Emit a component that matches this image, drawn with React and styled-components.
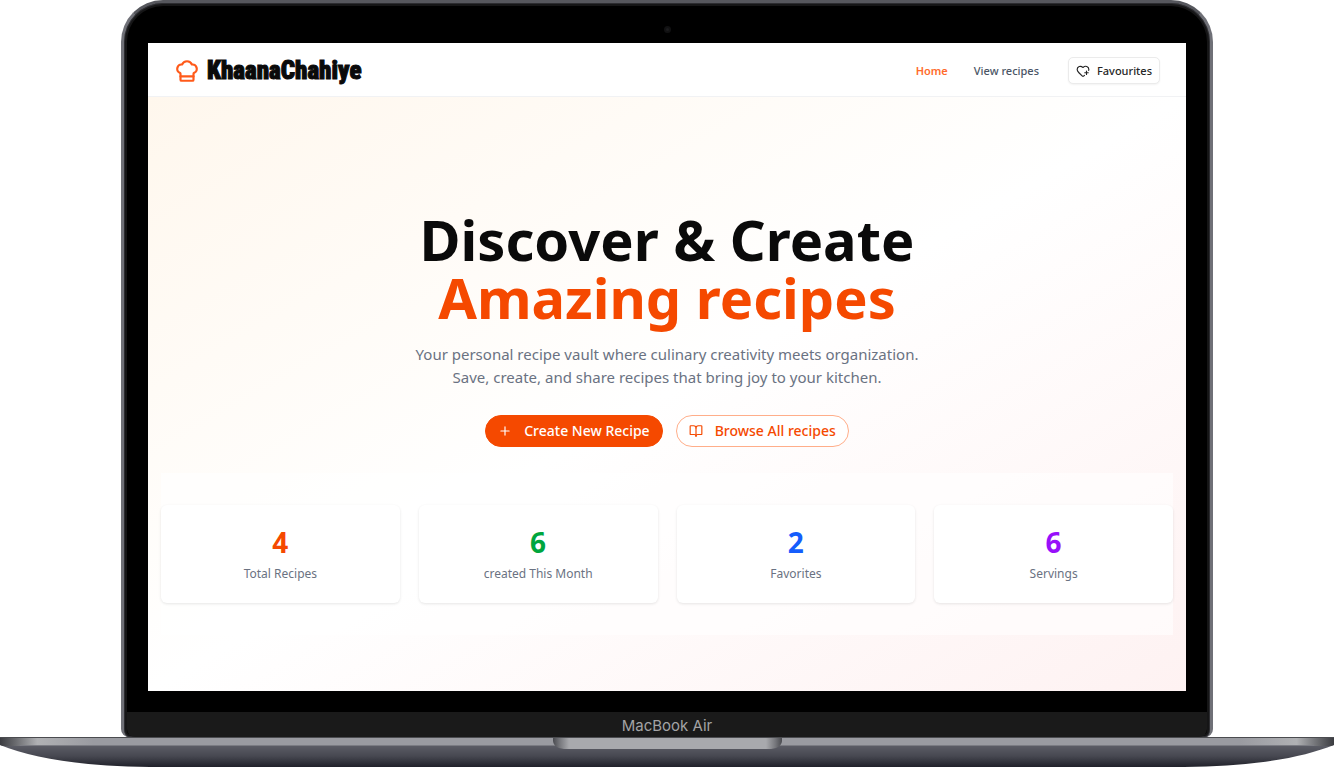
import React from "react";
import styled, { createGlobalStyle } from "styled-components";
import { ChefHat, Plus, BookOpen, HeartPlus } from "lucide-react";

const Global = createGlobalStyle`
  *, *::before, *::after { box-sizing: border-box; }
  body { margin: 0; background: #fff; font-family: "Noto Sans", "Open Sans", sans-serif; color: #0a0a0a; }
  h1, p, dl, dt, dd { margin: 0; }
  a { text-decoration: none; }
`;

const Laptop = styled.div`
  display: flex;
  flex-direction: column;
  overflow: hidden;
`;

const Lid = styled.div`
  margin: 0 121px;
  border-radius: 42px 42px 8px 8px;
  border: 3px solid #6f7077;
  border-top-color: #56575d;
  border-bottom: 0;
  background: #000;
  box-shadow: inset 0 0 0 1px #2c2c30, inset 0 0 0 3px #151516;
  display: flex;
  flex-direction: column;
`;

const CameraBar = styled.div`
  height: 40px;
  display: flex;
  justify-content: center;
  align-items: center;
  padding-top: 12px;
`;

const Camera = styled.span`
  width: 7px;
  height: 7px;
  border-radius: 50%;
  background: #1c1c1e;
  border: 2px solid #111112;
`;

const Screen = styled.div`
  margin: 0 24px 21px;
  display: flex;
  flex-direction: column;
`;

const Chin = styled.div`
  height: 25px;
  margin: 0 3px;
  background: #1a1a1a;
  border-radius: 0 0 8px 8px;
  color: #a3a3a5;
  font: 400 15px/27px Inter, "Liberation Sans", sans-serif;
  text-align: center;
`;

const Header = styled.header`
  display: flex;
  justify-content: space-between;
  align-items: center;
  height: 54px;
  padding: 2px 26px 0;
  background: #fff;
  border-bottom: 1px solid #f1f2f4;
`;

const Brand = styled.a`
  display: flex;
  align-items: center;
  gap: 7px;
  color: #0a0a0a;
  font: 900 25px/32px Impact, "Roboto Condensed", Roboto, sans-serif;
  -webkit-text-stroke: 1px currentColor;
  svg { color: #ff5a1a; }
`;

const Nav = styled.nav`
  display: flex;
  align-items: center;
  gap: 26px;
`;

const NavLink = styled.a`
  color: ${(p) => (p.$active ? "#ff6b2c" : "#4a5565")};
  font-size: 11px;
  line-height: 16px;
  font-weight: ${(p) => (p.$active ? 600 : 500)};
`;

const FavButton = styled.button`
  display: flex;
  align-items: center;
  gap: 7px;
  height: 27px;
  margin-left: 3px;
  padding: 0 7px;
  border: 1px solid #ebebeb;
  border-radius: 5px;
  background: #fff;
  box-shadow: 0 1px 2px rgba(0, 0, 0, 0.05);
  color: #262626;
  font: 500 11px/16px "Noto Sans", "Open Sans", sans-serif;
`;

const Hero = styled.main`
  display: flex;
  flex-direction: column;
  align-items: center;
  padding: 113px 13px 56px;
  background: linear-gradient(to bottom right, #fff7ed, #ffffff 50%, #fef2f2);
  text-align: center;
`;

const Title = styled.h1`
  font-size: 56px;
  line-height: 58px;
  font-weight: 700;
  span { display: block; color: #f54900; }
`;

const Lead = styled.p`
  margin-top: 17px;
  max-width: 540px;
  color: #6a7282;
  font-size: 15px;
  line-height: 23px;
`;

const Actions = styled.div`
  display: flex;
  gap: 13px;
  margin-top: 26px;
`;

const Action = styled.button`
  display: flex;
  align-items: center;
  gap: 12px;
  height: 32px;
  padding: 0 12px;
  border: 1px solid ${(p) => (p.$primary ? "#f54900" : "#ffae8a")};
  border-radius: 16px;
  background: ${(p) => (p.$primary ? "#f54900" : "#fff")};
  color: ${(p) => (p.$primary ? "#fff" : "#f54900")};
  font: 500 14px/20px "Noto Sans", "Open Sans", sans-serif;
`;

const Stats = styled.dl`
  align-self: stretch;
  display: grid;
  grid-template-columns: repeat(4, 1fr);
  gap: 19px;
  margin-top: 26px;
  padding: 32px 0;
  background: rgba(255, 255, 255, 0.6);
`;

const Stat = styled.div`
  display: flex;
  flex-direction: column-reverse;
  gap: 4px;
  padding: 19px 16px;
  border-radius: 6px;
  background: #fff;
  box-shadow: 0 1px 3px rgba(0, 0, 0, 0.1);
`;

const StatLabel = styled.dt`
  color: #6a7282;
  font-size: 12px;
  line-height: 20px;
`;

const StatValue = styled.dd`
  color: ${(p) => p.$color};
  font-size: 28px;
  line-height: 36px;
  font-weight: 700;
`;

const Base = styled.svg`
  display: block;
  width: 100%;
  height: 30px;
`;

const stats = [
  { value: 4, label: "Total Recipes", color: "#f54900" },
  { value: 6, label: "created This Month", color: "#00a63e" },
  { value: 2, label: "Favorites", color: "#155dfc" },
  { value: 6, label: "Servings", color: "#9810fa" },
];

function LaptopBase() {
  return (
    <Base viewBox="0 0 1334 30" preserveAspectRatio="none" aria-hidden="true">
      <defs>
        <linearGradient id="body" x1="0" y1="0" x2="0" y2="1">
          <stop offset="0" stopColor="#5d5e67" />
          <stop offset="0.5" stopColor="#474851" />
          <stop offset="1" stopColor="#20212a" />
        </linearGradient>
        <linearGradient id="edge" x1="0" y1="0" x2="1" y2="0">
          <stop offset="0" stopColor="#3a3b40" />
          <stop offset="0.012" stopColor="#6b6c70" />
          <stop offset="0.028" stopColor="#b0b1b4" />
          <stop offset="0.07" stopColor="#9a9ba1" />
          <stop offset="0.93" stopColor="#9a9ba1" />
          <stop offset="0.972" stopColor="#b0b1b4" />
          <stop offset="0.988" stopColor="#6b6c70" />
          <stop offset="1" stopColor="#3a3b40" />
        </linearGradient>
        <linearGradient id="notch" x1="0" y1="0" x2="1" y2="0">
          <stop offset="0" stopColor="#4a4b50" />
          <stop offset="0.03" stopColor="#77787d" />
          <stop offset="0.07" stopColor="#a8a9ad" />
          <stop offset="0.93" stopColor="#a8a9ad" />
          <stop offset="0.97" stopColor="#77787d" />
          <stop offset="1" stopColor="#4a4b50" />
        </linearGradient>
      </defs>
      <path d="M0 8C33 21 78 29 150 30H1184C1256 29 1301 21 1334 8Z" fill="url(#body)" />
      <path d="M0 0H1334V8L1331 9H3L0 8Z" fill="url(#edge)" />
      <path d="M0 0H1334V1H0Z" fill="#4b4c50" />
      <path d="M20 8H1314V9H20Z" fill="#7b7c83" />
      <path d="M553 1H782V4Q781 12 768 12H567Q554 12 553 4Z" fill="url(#notch)" />
    </Base>
  );
}

export default function App() {
  return (
    <Laptop>
      <Global />
      <Lid>
        <CameraBar><Camera /></CameraBar>
        <Screen>
          <Header>
            <Brand href="#"><ChefHat size={26} />KhaanaChahiye</Brand>
            <Nav>
              <NavLink href="#" $active>Home</NavLink>
              <NavLink href="#">View recipes</NavLink>
              <FavButton type="button"><HeartPlus size={14} />Favourites</FavButton>
            </Nav>
          </Header>
          <Hero>
            <Title>Discover &amp; Create<span>Amazing recipes</span></Title>
            <Lead>
              Your personal recipe vault where culinary creativity meets organization.
              Save, create, and share recipes that bring joy to your kitchen.
            </Lead>
            <Actions>
              <Action type="button" $primary><Plus size={14} />Create New Recipe</Action>
              <Action type="button"><BookOpen size={14} />Browse All recipes</Action>
            </Actions>
            <Stats>
              {stats.map((s) => (
                <Stat key={s.label}>
                  <StatLabel>{s.label}</StatLabel>
                  <StatValue $color={s.color}>{s.value}</StatValue>
                </Stat>
              ))}
            </Stats>
          </Hero>
        </Screen>
        <Chin>MacBook Air</Chin>
      </Lid>
      <LaptopBase />
    </Laptop>
  );
}
